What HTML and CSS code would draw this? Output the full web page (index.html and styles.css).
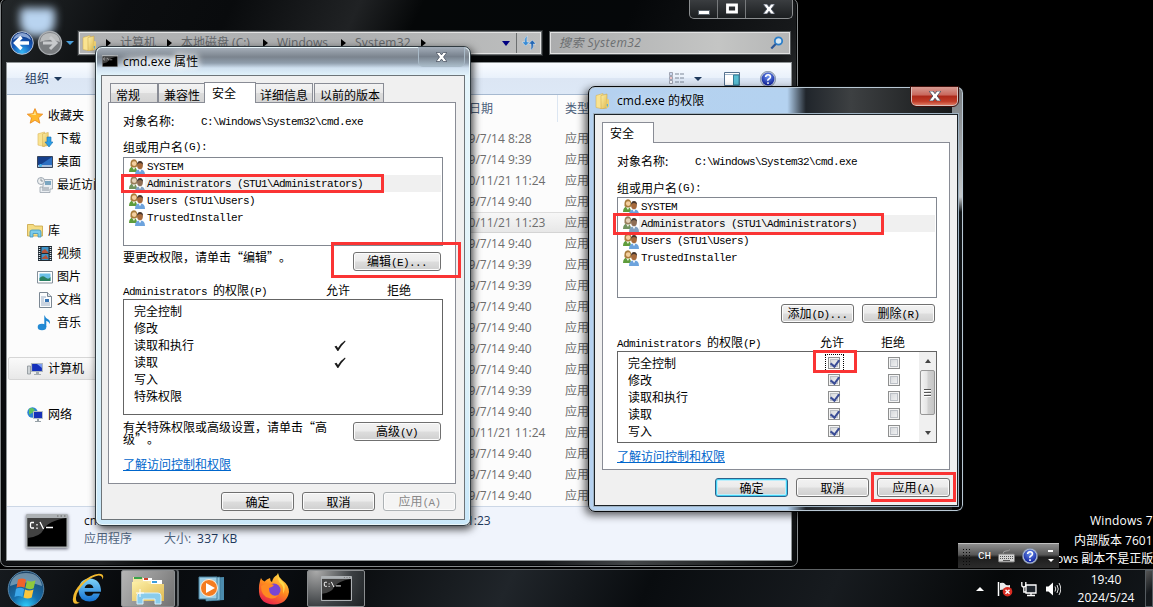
FILE: index.html
```html
<!DOCTYPE html>
<html lang="zh-CN">
<head>
<meta charset="utf-8">
<title>cmd.exe 权限</title>
<link rel="stylesheet" href="styles.css">
</head>
<body>
<svg class="defs" aria-hidden="true">
  <defs>
    <linearGradient id="gFolder" x1="0" y1="0" x2="1" y2="1"><stop offset="0" stop-color="#fdf0a8"/><stop offset="1" stop-color="#dfb84e"/></linearGradient>
    <radialGradient id="gBlue" cx=".5" cy=".9" r=".9"><stop offset="0" stop-color="#35b6f4"/><stop offset=".5" stop-color="#1558b8"/><stop offset="1" stop-color="#0c2a6c"/></radialGradient>
    <radialGradient id="gOrb" cx=".5" cy="1" r=".95"><stop offset="0" stop-color="#2fd2ff"/><stop offset=".4" stop-color="#1670ae"/><stop offset="1" stop-color="#1d4468"/></radialGradient>
    <radialGradient id="gHelp" cx=".5" cy=".3" r=".7"><stop offset="0" stop-color="#6d93ee"/><stop offset="1" stop-color="#0d1f9c"/></radialGradient>
    <linearGradient id="gFox" x1=".8" y1="0" x2=".3" y2="1"><stop offset="0" stop-color="#ffe24a"/><stop offset=".5" stop-color="#ff8a1e"/><stop offset="1" stop-color="#e8204c"/></linearGradient>
    <linearGradient id="gIe" x1="0" y1="0" x2="0" y2="1"><stop offset="0" stop-color="#7fd4fa"/><stop offset="1" stop-color="#1370d0"/></linearGradient>
    <symbol id="users" viewBox="0 0 16 16">
      <path d="M0 13q0-5 4-5.500q4 .5 4 5.500z" fill="#5e9c3c"/><path d="M3 8l2 3l1.500-3z" fill="#eef5e4"/>
      <path d="M1.500 7Q.8.500 5 .3q4 .4 3.200 7Q7.500 8.500 5 8.500T1.500 7z" fill="#a97c3b"/><circle cx="5.200" cy="4.600" r="2.300" fill="#f4cf9f"/>
      <path d="M6 16q0-5.500 5-5.700q5 .2 5 5.700z" fill="#6da3dd"/><path d="M9.500 10.200l1.500 3l1.500-3z" fill="#fff"/>
      <ellipse cx="11" cy="6.600" rx="2.900" ry="3.600" fill="#a66a3c"/><path d="M8 6q0-4 3-4t3 4q-1-2-3-2T8 6z" fill="#46352b"/>
    </symbol>
    <symbol id="folder" viewBox="0 0 16 16">
      <path d="M1 2.500L8 .5V16L1 14.500z" fill="#f9e391" stroke="#d1aa48" stroke-width=".5"/>
      <path d="M6 2.500l6-1.500v14L6 16z" fill="url(#gFolder)" stroke="#c79f40" stroke-width=".5"/>
      <path d="M12 6l2 .5V14l-3 1z" fill="#edcf72"/><path d="M12.300 11v2.500" stroke="#3fa8e0"/>
    </symbol>
    <symbol id="term" viewBox="0 0 42 34">
      <rect width="42" height="34" rx="1" fill="#aeb2b5"/><rect x="1.500" y="4" width="39" height="28.500" fill="#000"/>
      <path d="M1.500 4h39Q22 7 18 15T1.500 24z" fill="#666" opacity=".65"/><path d="M31 2h1.500m2 0H36m2 0h1.500" stroke="#666"/>
      <path d="M8 8.500H5.500q-1 0-1 1.500v2.500q0 1.500 1 1.500H8M11 10v1.500m0 2V15M14 8l3.500 7M20 13.500h7" fill="none" stroke="#fff" stroke-width="1.300"/>
    </symbol>
    <symbol id="help" viewBox="0 0 16 16">
      <circle cx="8" cy="8" r="7.700" fill="#b8c4d8" stroke="#65738c" stroke-width=".6"/><circle cx="8" cy="8" r="6.400" fill="url(#gHelp)"/>
      <path d="M5.600 6q.2-2.300 2.500-2.300T10.500 6Q10.300 7.300 8.900 8T8 9.800M8 11.200v1.700" stroke="#fff" stroke-width="1.600" fill="none"/>
    </symbol>
    <symbol id="cross" viewBox="0 0 12 10">
      <path d="M0 0h4l2 2.700L8 0h4L8.200 5L12 10H8L6 7.300L4 10H0l3.800-5z" fill="#fff" stroke="#4b5462" stroke-width=".9"/>
    </symbol>
    <symbol id="tick" viewBox="0 0 12 12"><path d="M.5 6.500L2.500 5.800L4 8Q7 3 11 .5L11.500 1.500Q7 6 4.300 11H3.500z" fill="#1b1b1b"/></symbol>
  </defs>
</svg>

<div class="desktop">
  <section class="window explorer">
    <div class="glow"></div>
    <div class="chrome">
      <div class="caption-buttons">
        <span><svg width="12" height="12" viewBox="0 0 12 12"><rect x=".5" y="7.500" width="11" height="4" fill="#fff" stroke="#59636c"/></svg></span>
        <span><svg width="12" height="12" viewBox="0 0 12 12"><path d="M1.500 2h9v7h-9z" fill="none" stroke="#fff" stroke-width="2.800"/></svg></span>
        <span class="wide"><svg width="12" height="10"><use href="#cross"/></svg></span>
      </div>
      <div class="navbar">
        <svg class="back" width="24" height="24" viewBox="0 0 24 24"><circle cx="12" cy="12" r="11.300" fill="url(#gBlue)" stroke="#b6c2d6"/><path d="M3 9q9-7 18 0q-2-7-9-7T3 9z" fill="#bcd2f4" opacity=".7"/><path d="M11.500 6L5.500 12l6 6M6 12h13" stroke="#fff" stroke-width="3.400" fill="none"/></svg>
        <svg class="fwd" width="26" height="26" viewBox="0 0 26 26"><circle cx="13" cy="13" r="11.500" fill="#7a7d80" stroke="#aaaeb2" stroke-width="1.300"/><path d="M3 12q1-9 10-9t10 9q-10-4-20 0z" fill="#b9bbbc"/><path d="M13 7l6 6l-6 6M18 13H6" stroke="#c8cacc" stroke-width="3" fill="none"/></svg>
        <i class="drop blue"></i>
        <div class="address">
          <svg width="16" height="16"><use href="#folder"/></svg>
          <i class="right c1"></i><span class="a1">计算机</span><i class="right"></i><span class="a2">本地磁盘 (C:)</span><i class="right"></i><span class="a3">Windows</span><i class="right"></i><span class="a4">System32</span><i class="right"></i>
          <i class="drop navy"></i>
          <b class="refresh"><svg width="16" height="16" viewBox="0 0 16 16"><path d="M6.500 1Q3 2 3.500 7H1l3.700 4L8.500 7H6Q5.500 3.500 6.500 1z" fill="#3a8cd4" stroke="#e4eef6" stroke-width=".5"/><path d="M9.500 15q3.500-1 3-6H15l-3.700-4L7.500 9H10q.5 3.500-.5 6z" fill="#2467b4" stroke="#e4eef6" stroke-width=".5"/></svg></b>
        </div>
        <div class="search"><em>搜索 System32</em><svg width="14" height="14" viewBox="0 0 14 14"><circle cx="8.500" cy="5" r="3.700" fill="#d7e8f4" stroke="#2b7ec9" stroke-width="1.800"/><path d="M5.700 8L1.300 12.500" stroke="#2c5797" stroke-width="2.200"/></svg></div>
      </div>
    </div>
    <div class="shell">
      <div class="toolbar">
        <span>组织</span><i class="drop dark"></i>
        <svg class="views" width="16" height="13" viewBox="0 0 16 13"><path d="M.5.500h3v3h-3zM.5 4.500h3v3h-3zM.5 8.500h3v3h-3z" fill="#f7f8fc" stroke="#8a8fa0" stroke-width=".8"/><path d="M1.500 2h1" stroke="#4478c8"/><path d="M1.500 6h1" stroke="#c22"/><path d="M6 2h4M11 2h4M6 6h4M11 6h4M6 10h4M11 10h4" stroke="#7d8796"/></svg>
        <i class="drop dark v"></i>
        <svg class="preview" width="16" height="14" viewBox="0 0 16 14"><path d="M.5.500h15v13H.5z" fill="#fff" stroke="#54718e"/><path d="M1 2.500h14" stroke="#9fb5cb"/><path d="M9.500 3H15v10H9.500z" fill="#58bdd2" stroke="#357e96"/></svg>
        <svg class="helpicon" width="16" height="16"><use href="#help"/></svg>
      </div>
      <div class="main">
        <nav class="tree">
          <div><svg width="16" height="16" viewBox="0 0 16 16"><path d="M8 .6l2.200 5.100l5.500.5l-4.200 3.600l1.300 5.400L8 12.300l-4.800 2.900l1.300-5.400L.3 6.200l5.500-.5z" fill="#ffb92e" stroke="#e98418" stroke-width=".8"/><path d="M8 3l1 4l-6 0l4-1z" fill="#ffe797"/></svg>收藏夹</div>
          <div class="sub"><svg width="16" height="16" viewBox="0 0 16 16"><use href="#folder" width="15" height="16"/><path d="M10 6h4v5h2l-4 5l-4-5h2z" fill="#2d9ee4" stroke="#1671b5" stroke-width=".6"/></svg>下载</div>
          <div class="sub"><svg width="16" height="16" viewBox="0 0 16 16"><path d="M.5 2.500h15v11H.5z" fill="#2c6fc2" stroke="#37455c"/><path d="M1 3h14L3 11H1z" fill="#153f8b"/><path d="M1 12h14" stroke="#a9bfdc" stroke-width="2"/><circle cx="3.500" cy="11.500" r="1.500" fill="#46b5eb"/></svg>桌面</div>
          <div class="sub"><svg width="16" height="16" viewBox="0 0 16 16"><path d="M6 2.500h9.500V12H13v3.500H3V10h3z" fill="#e9edf1" stroke="#98a2ac" stroke-width=".8"/><path d="M8 4h6v4H8z" fill="#7aa5c0"/><circle cx="4" cy="4" r="3.500" fill="#eef0f1" stroke="#8b98a4" stroke-width=".8"/><path d="M4 1.500V4h2M5 11h7M5 13h7" stroke="#74818e" stroke-width=".8" fill="none"/></svg>最近访问的位置</div>
          <div class="gap"></div>
          <div><svg width="16" height="15" viewBox="0 0 16 15"><path d="M.5 1.500h6l1 1.500h8v10H.5z" fill="#f4dc83" stroke="#c8a343" stroke-width=".8"/><path d="M3 14V9q0-2 2-2h7q2 0 2 2v5h-3v-3.500H6V14z" fill="#7bcbea" stroke="#3f94bf" stroke-width=".8"/></svg>库</div>
          <div class="sub"><svg width="16" height="16" viewBox="0 0 16 16"><path d="M1 0h14v15H1z" fill="#202a33"/><path d="M4.500 1h7v6h-7zM4.500 8h7v6h-7z" fill="#3f93c7"/><path d="M5 5l3-2l3 3v1H5zM5 12l4-3l2 3v1H5z" fill="#b4533a"/><path d="M2.500 1v14M13.500 1v14" stroke="#dce5eb" stroke-dasharray="1 1" stroke-width="1.500"/></svg>视频</div>
          <div class="sub"><svg width="16" height="14" viewBox="0 0 16 14"><path d="M.5 1.500h15v11.500H.5z" fill="#fff" stroke="#84909a"/><path d="M2.500 3.500h11v7.500h-11z" fill="#6cc0e8"/><path d="M2.500 8q3-3 6-.5t5-.5v4h-11z" fill="#298060"/></svg>图片</div>
          <div class="sub"><svg width="16" height="16" viewBox="0 0 16 16"><path d="M2.500.500h8l4 4v11h-12z" fill="#fbfcfd" stroke="#7b8793"/><path d="M10.500.500v4h4" fill="#dde4ea" stroke="#7b8793"/><path d="M4 5h5M4 7h3M4 9h3M4 11h9M4 13h9" stroke="#8ca3bc" stroke-width=".9"/><path d="M8 7h4v3H8z" fill="#3573b4"/></svg>文档</div>
          <div class="sub"><svg width="16" height="16" viewBox="0 0 16 16"><ellipse cx="5" cy="12" rx="4.300" ry="3.200" fill="#238ad4"/><path d="M7.300 12V0Q8.500 3 11 4.300T12.800 9Q12 6.500 9.300 5.800V12z" fill="#1d86d2"/></svg>音乐</div>
          <div class="gap"></div>
          <div class="hot"><svg width="16" height="16" viewBox="0 0 16 16"><path d="M.5 5h3v8h-3z" fill="#cfd4d7" stroke="#899095" stroke-width=".8"/><path d="M4.500 2.500h11v8h-11z" fill="#1430bb" stroke="#aeb7bf" stroke-width="1.200"/><path d="M10 3h5v4z" fill="#7a9bf0"/><path d="M9 11h3v2h2v1H7v-1h2z" fill="#a3acb1"/></svg>计算机</div>
          <div class="gap"></div>
          <div><svg width="16" height="16" viewBox="0 0 16 16"><circle cx="5.500" cy="5.500" r="5.200" fill="#2c82d5"/><path d="M2 2q3-2 5 0T5 6T2 8z" fill="#5fc35c"/><path d="M6.500 4.500h9v7h-9z" fill="#1732b8" stroke="#b6c0c7"/><path d="M10 12h2v2h2v1H8v-1h2z" fill="#98a2a8"/></svg>网络</div>
        </nav>
        <div class="files">
          <div class="cols"><span>修改日期</span><span>类型</span></div>
          <div class="cut"></div>
          <div class="row"><span>2009/7/14 8:28</span><span>应用程序</span></div>
          <div class="row"><span>2009/7/14 9:39</span><span>应用程序</span></div>
          <div class="row"><span>2010/11/21 11:24</span><span>应用程序</span></div>
          <div class="row"><span>2009/7/14 9:40</span><span>应用程序</span></div>
          <div class="row sel"><span>2010/11/21 11:23</span><span>应用程序</span></div>
          <div class="row"><span>2009/7/14 9:40</span><span>应用程序</span></div>
          <div class="row"><span>2009/7/14 9:39</span><span>应用程序</span></div>
          <div class="row"><span>2009/7/14 9:39</span><span>应用程序</span></div>
          <div class="row"><span>2009/7/14 9:40</span><span>应用程序</span></div>
          <div class="row"><span>2009/7/14 9:40</span><span>应用程序</span></div>
          <div class="row"><span>2009/7/14 9:40</span><span>应用程序</span></div>
          <div class="row"><span>2009/7/14 9:40</span><span>应用程序</span></div>
          <div class="row"><span>2009/7/14 9:39</span><span>应用程序</span></div>
          <div class="row"><span>2009/7/14 9:40</span><span>应用程序</span></div>
          <div class="row"><span>2010/11/21 11:24</span><span>应用程序</span></div>
          <div class="row"><span>2009/7/14 9:40</span><span>应用程序</span></div>
          <div class="row"><span>2009/7/14 9:40</span><span>应用程序</span></div>
          <div class="row"><span>2009/7/14 9:40</span><span>应用程序</span></div>
        </div>
      </div>
      <div class="details">
        <svg width="42" height="34"><use href="#term"/></svg>
        <div class="info">
          <div class="line"><span class="i1">cmd.exe</span><span class="i2">修改日期: 2010/11/21 11:23</span><span class="i3">创建日期: 2010/11/21 11:23</span></div>
          <div class="line"><span class="i4">应用程序</span><span class="i5">大小:</span><span class="i6">337 KB</span></div>
        </div>
      </div>
    </div>
  </section>

  <section class="window dialog props">
    <header><svg width="16" height="12" viewBox="0 0 42 34" preserveAspectRatio="none"><use href="#term"/></svg><h1>cmd.exe 属性</h1><span class="close glass"><svg width="11" height="10"><use href="#cross"/></svg></span></header>
    <div class="client">
      <div class="tabs"><span class="t1">常规</span><span class="t2">兼容性</span><span class="t3 on">安全</span><span class="t4">详细信息</span><span class="t5">以前的版本</span></div>
      <div class="panel">
        <div class="ln object"><span>对象名称:</span><code>C:\Windows\System32\cmd.exe</code></div>
        <div class="ln group">组或用户名<code>(G):</code></div>
        <ul class="users">
          <li><svg width="16" height="16"><use href="#users"/></svg><code>SYSTEM</code></li>
          <li class="sel"><svg width="16" height="16"><use href="#users"/></svg><code>Administrators (STU1\Administrators)</code></li>
          <li><svg width="16" height="16"><use href="#users"/></svg><code>Users (STU1\Users)</code></li>
          <li><svg width="16" height="16"><use href="#users"/></svg><code>TrustedInstaller</code></li>
        </ul>
        <div class="ask edit"><p>要更改权限，请单击<q class="l">“</q>编辑<q>”</q>。</p><button>编辑<code>(E)...</code></button></div>
        <div class="ln perm"><span><code>Administrators </code>的权限<code>(P)</code></span><span>允许</span><span>拒绝</span></div>
        <ul class="perms">
          <li><span>完全控制</span></li><li><span>修改</span></li>
          <li><span>读取和执行</span><svg width="12" height="12"><use href="#tick"/></svg></li>
          <li><span>读取</span><svg width="12" height="12"><use href="#tick"/></svg></li>
          <li><span>写入</span></li><li><span>特殊权限</span></li>
        </ul>
        <div class="ask adv"><p>有关特殊权限或高级设置，请单击<q class="l">“</q>高<br>级<q>”</q>。</p><button>高级<code>(V)</code></button></div>
        <a class="link">了解访问控制和权限</a>
      </div>
      <footer><button>确定</button><button>取消</button><button class="off">应用<code>(A)</code></button></footer>
    </div>
  </section>

  <section class="window dialog rights">
    <header><svg width="16" height="16"><use href="#folder"/></svg><h1>cmd.exe 的权限</h1><span class="close red"><svg width="12" height="10"><use href="#cross"/></svg></span></header>
    <div class="client">
      <div class="tabs"><span class="t3 on">安全</span></div>
      <div class="panel">
        <div class="ln object"><span>对象名称:</span><code>C:\Windows\System32\cmd.exe</code></div>
        <div class="ln group">组或用户名<code>(G):</code></div>
        <ul class="users">
          <li><svg width="16" height="16"><use href="#users"/></svg><code>SYSTEM</code></li>
          <li class="sel"><svg width="16" height="16"><use href="#users"/></svg><code>Administrators (STU1\Administrators)</code></li>
          <li><svg width="16" height="16"><use href="#users"/></svg><code>Users (STU1\Users)</code></li>
          <li><svg width="16" height="16"><use href="#users"/></svg><code>TrustedInstaller</code></li>
        </ul>
        <div class="pair"><button>添加<code>(D)...</code></button><button>删除<code>(R)</code></button></div>
        <div class="ln perm"><span><code>Administrators </code>的权限<code>(P)</code></span><span>允许</span><span>拒绝</span></div>
        <div class="permbox">
          <ul>
            <li><span>完全控制</span><i class="cb yes focus"></i><i class="cb"></i></li>
            <li><span>修改</span><i class="cb yes"></i><i class="cb"></i></li>
            <li><span>读取和执行</span><i class="cb yes"></i><i class="cb"></i></li>
            <li><span>读取</span><i class="cb yes"></i><i class="cb"></i></li>
            <li><span>写入</span><i class="cb yes"></i><i class="cb"></i></li>
          </ul>
          <div class="scroll"><i class="up"></i><div class="thumb"><b></b><b></b><b></b></div><i class="down"></i></div>
        </div>
        <a class="link">了解访问控制和权限</a>
      </div>
      <footer><button class="default">确定</button><button>取消</button><button>应用<code>(A)</code></button></footer>
    </div>
  </section>

  <div class="mark m1"></div><div class="mark m2"></div><div class="mark m3"></div><div class="mark m4"></div><div class="mark m5"></div>

  <div class="watermark"><div class="w1">Windows 7</div><div class="w2">内部版本 7601</div><div class="w3">ows 副本不是正版</div></div>

  <div class="langbar"><i class="grip"></i><code>CH</code>
    <svg width="17" height="14" viewBox="0 0 17 14"><path d="M5 5Q5 2 8 2t4-1.500" fill="none" stroke="#999"/><rect x=".5" y="5" width="16" height="8" rx="1" fill="#d4d4d4" stroke="#777"/><path d="M2 7.500h13M2 9.500h13" stroke="#555" stroke-dasharray="1 1"/><path d="M5 11.500h7" stroke="#555"/></svg>
    <svg width="16" height="16"><use href="#help"/></svg><span class="opts"><b></b><i></i></span></div>

  <div class="taskbar">
    <svg class="orb" width="38" height="38" viewBox="0 0 38 38"><circle cx="19" cy="19" r="17.800" fill="url(#gOrb)" stroke="#5683a5"/><path d="M3 16Q5 3 19 3t16 13q-16-7-32 0z" fill="#bdd5df" opacity=".5"/>
      <path d="M11 9.500q4-2 8 .2l-1.500 8q-4-2-8 0z" fill="#f0632b"/><path d="M20 10.500q4 2 8.500-.3l-1.800 8q-4 2-8.300-.2z" fill="#90c93d"/><path d="M9 18.700q4-2 8.200.2l-1.700 8q-4-2-8 0z" fill="#3ba6e8"/><path d="M18 19.500q4 2 8.500 0l-1.800 8q-4 2-8.200 0z" fill="#fbc63b"/></svg>
    <svg class="ie" width="32" height="32" viewBox="0 0 32 32"><path d="M28 20.500h-6.500q-1.500 2.500-4.500 2.500-4 0-4.500-4.300H29Q29 6 17.500 5.500 7 6 6.500 17.500 7 28 17.500 28.500q8 0 10.500-8zM12.600 15q.8-3.800 4.500-3.800t4.400 3.800z" fill="url(#gIe)"/><path d="M30.500 6.500Q33 1 27 .8 19 1 9.500 10 1 18 .8 26.500 1 33 8 29.500 3.500 30 4 24.500 5 17 13 9.500 21 3 26.500 2.500 30.500 2.500 30.500 6.500z" fill="#f2b92e"/></svg>
    <div class="task folderbtn"><svg width="34" height="32" viewBox="0 0 34 32"><path d="M2 4h9l2 3h18v5H2z" fill="#f7e7a4"/><path d="M3 4h8v2H3z" fill="#39a34b"/><path d="M12 5h9v3h-9z" fill="#fff"/><path d="M13 5h4v2h-4z" fill="#d0402c"/><path d="M20 7h11v4H20z" fill="#fff"/><path d="M21 8h5v2h-5z" fill="#3c9ddb"/><path d="M1 9h15l2 2h15v17H1z" fill="url(#gFolder)"/><path d="M6 31V23q0-3 3-3h18q3 0 3 3v8h-6v-5H12v5z" fill="#8accec" stroke="#d8f0fb"/><path d="M9 16v8M5 20h8" stroke="#fff"/></svg></div>
    <svg class="wmp" width="27" height="26" viewBox="0 0 27 26"><path d="M10 2l16-1v23l-14 1z" fill="#4b8bad"/><path d="M6 2l16-1v23L8 25z" fill="#8cc4dc" stroke="#39728f" stroke-width=".7"/><path d="M1 1h18v22H1z" fill="#9dcfe6" stroke="#49809d"/><circle cx="11" cy="12" r="8.500" fill="#f47c20" stroke="#fff0dc"/><path d="M8 7l9 5l-9 5z" fill="#fff"/></svg>
    <svg class="fox" width="32" height="32" viewBox="0 0 32 32"><path d="M3 5q1 3 3.500 3.500Q8.500 6 12 5q0 3 2 4 1-5 5-7l1-2q.5 4 4 7 7 5 7 12-2 12-15 12.500Q2 31 1 19 .500 11 3 5z" fill="url(#gFox)"/><circle cx="16" cy="17" r="6.500" fill="#7846d3"/><path d="M3 13q6-4 13-1-1 2-5 3 0 3 1 5 3 4 8 2-3 5-9 3-8-2-8-12z" fill="#ff8a22"/><path d="M20 3q0 6 3 8t2 10q4-8-1-13t-4-5z" fill="#ffd84a"/></svg>
    <div class="task cmdbtn"><svg width="31" height="25" viewBox="0 0 42 34" preserveAspectRatio="none"><use href="#term"/></svg></div>
    <div class="tray">
      <i class="up"></i>
      <svg width="16" height="16" viewBox="0 0 16 16"><path d="M1.500 1v14" stroke="#fff" stroke-width="1.500"/><path d="M3 2q4-1 5 1t5 1v6q-4 0-5-1T3 9z" fill="#ececec"/><circle cx="10.500" cy="10.700" r="4.800" fill="#d92c22"/><path d="M8.500 8.700l4 4m0-4l-4 4" stroke="#fff" stroke-width="1.500"/></svg>
      <svg width="16" height="16" viewBox="0 0 16 16"><path d="M5 4h10v8H5z" fill="#20262d" stroke="#fff" stroke-width="1.300"/><path d="M10 12v2M6 14.500h8M.8 1v3q0 2 2 2t2-2V1M2.800 6v5H5" stroke="#fff" stroke-width="1.300" fill="none"/></svg>
      <svg width="16" height="16" viewBox="0 0 16 16"><path d="M1 5.500h2.500L8 1.500v13l-4.500-4H1z" fill="#fff"/><path d="M10 5.500q1.500 2.500 0 5M12 4q2.500 4 0 8M14 2q3.500 6 0 12" stroke="#ddd" fill="none"/></svg>
      <div class="clock"><div>19:40</div><div>2024/5/24</div></div>
      <b class="peek"></b>
    </div>
  </div>
</div>
</body>
</html>
```
FILE: styles.css
```css
* { box-sizing: border-box; }
body { margin: 0; background: #000; }
.defs { position: absolute; width: 0; height: 0; }
.desktop { position: relative; width: 1153px; height: 607px; overflow: hidden; background: #000; font: 12px/16px "Open Sans", "Noto Sans CJK SC", sans-serif; white-space: nowrap; }
svg { display: block; flex: none; }
i { flex: none; }
.window { position: absolute; display: flex; flex-direction: column; }

/* triangles */
.drop { width: 0; height: 0; border: 4px solid transparent; border-top-color: #1e395b; border-bottom: 0; }
.drop.blue { border-top-color: #4b9ed8; margin-left: 3px; }
.drop.navy { border-top: 5px solid #000080; margin-left: auto; margin-right: 6px; }
.right { width: 0; height: 0; border: 4px solid transparent; border-left: 5px solid #000; border-right: 0; }

/* explorer */
.explorer { left: 0; top: -2px; width: 798px; height: 569px; border: 1px solid #85898b; border-radius: 7px; background: linear-gradient(115deg, #24282a 0, #0c0e10 12%, #090b0d 22%, #202224 34%, #050708 40%, #050709 60%, #17191b 76%, #434648 84%, #080a0b 100%); box-shadow: inset 0 0 0 1px #050607; padding: 0 5px 5px; }
.glow { position: absolute; left: 19px; top: 9px; width: 35px; height: 28px; background: #b9d4f0; border-radius: 4px 4px 14px 14px; filter: blur(4px); }
.chrome { height: 63px; flex: none; position: relative; }
.caption-buttons { display: flex; width: 104px; height: 20px; margin-left: 683px; border: 1px solid #8b8e90; border-top: 0; border-radius: 0 0 5px 5px; background: linear-gradient(#3c3f42, #1b1e20); }
.caption-buttons span { width: 28px; border-right: 1px solid #777a7c; display: grid; place-items: center; }
.caption-buttons .wide { width: 46px; border: 0; }
.navbar { display: flex; align-items: center; height: 26px; margin-top: 11px; padding-left: 4px; position: relative; }
.fwd { margin-left: 3px; }
.address { margin-left: 4px; width: 464px; height: 24px; display: flex; align-items: center; border: 1px solid #6b6f71; outline: 1px solid #25282a; box-shadow: inset 0 0 0 1px #e4e4e4; background: linear-gradient(90deg, #b2b3b4, #aeb0b1 60%, #bdbebe); padding-left: 3px; color: #636669; }
.address span { padding: 0 12px 0 9px; }
.c1 { margin-left: 8px; }
.address .a1 { width: 56px; } .address .a2 { width: 91px; } .address .a3 { width: 73px; } .address .a4 { width: 75px; letter-spacing: .2px; }
.refresh { width: 25px; height: 20px; border-left: 1px solid #6c6f70; display: grid; place-items: center; }
.search { margin-left: 7px; width: 242px; height: 24px; display: flex; justify-content: space-between; align-items: center; padding: 0 6px 0 9px; border: 1px solid #54585a; box-shadow: inset 0 0 0 1px #e2e2e2; background: linear-gradient(90deg, #abacad, #c4c5c4 70%, #b5b6b6); color: #6b6e70; letter-spacing: .45px; }
.shell { flex: 1; min-height: 0; width: 786px; border: 1px solid #8f9496; background: #fcfcfc; display: flex; flex-direction: column; overflow: hidden; }
.toolbar { height: 32px; flex: none; display: flex; align-items: center; padding-left: 18px; color: #1e395b; background: linear-gradient(#fafcff, #e9f1fb 48%, #dce6f4 50%, #dde8f6); border-bottom: 1px solid #a6b9d0; }
.toolbar .drop { margin-left: 5px; }
.views { margin-left: 607px; }
.toolbar .v { margin-left: 9px; }
.preview { margin-left: 22px; }
.helpicon { margin-left: 20px; }
.main { flex: 1; min-height: 0; display: flex; overflow: hidden; }
.tree { width: 190px; flex: none; padding-top: 9px; color: #000; }
.tree div { height: 23px; display: flex; align-items: center; gap: 5px; padding-left: 20px; }
.tree .sub { padding-left: 30px; gap: 4px; }
.tree .hot { margin: 0 1px; padding-left: 18px; border: 1px solid #d6d6d6; border-radius: 2px; background: linear-gradient(#fafafa, #e8e8e8); }
.files { flex: 1; padding-left: 251px; color: #6d6d6d; }
.cols { display: flex; height: 27px; align-items: center; color: #4c607a; background: linear-gradient(90deg, transparent 109px, #dce6f2 109px, #dce6f2 110px, transparent 110px); }
.cols span:first-child, .row span:first-child { width: 117px; flex: none; }
.cols span:first-child { margin-left: -3px; width: 120px; }
.cut { height: 6px; }
.row { height: 21px; display: flex; align-items: center; }
.row.sel { background: linear-gradient(#f7f7f7, #e7e7e7); border-top: 1px solid #ddd; border-bottom: 1px solid #d4d4d4; }
.details { height: 54px; flex: none; border-top: 1px solid #ccd7e6; background: #f0f4fc; display: flex; padding: 7px 0 0 19px; color: #1e395b; }
.details > svg { box-shadow: 0 1px 3px #667; }
.info { padding-left: 16px; }
.line { display: flex; height: 18px; line-height: 14px; }
.i1 { width: 58px; color: #111; } .i2 { width: 197px; }
.i4 { width: 80px; color: #51657f; } .i5 { width: 33px; color: #51657f; } .i6 { letter-spacing: .3px; }

/* dialogs */
.dialog { padding: 0 5px 5px; border-radius: 7px; font: 12px/12px "Noto Sans CJK SC", sans-serif; color: #000; }
.dialog code { font: 11px/12px "Liberation Mono", monospace; letter-spacing: -.6px; white-space: pre; }
.dialog .users code, .dialog .object code { line-height: 14px; }
.dialog .users code { margin-top: 1px; }
.dialog header { display: flex; flex: none; }
.dialog h1 { margin: 0; font: 12px/16px "Open Sans", "Noto Sans CJK SC", sans-serif; letter-spacing: .1px; }
.props { left: 95px; top: 46px; width: 376px; height: 480px; border: 1px solid #303a40; background: linear-gradient(#a8b1bc 0, #7b848e 10px, #8f9dac 16px, #cfe0f0 21px, #e4f5fc 29px, #e3f3f8 60%, #c9e8fa); box-shadow: inset 0 0 0 1px #eaf7fb, 2px 3px 8px rgba(0,0,0,.75); }
.props header { height: 28px; padding: 8px 0 0 1px; }
.props h1 { padding: 0 6px 0 5px; margin-top: -1px; background: radial-gradient(closest-side, rgba(226,236,245,.75) 40%, transparent); text-shadow: 0 0 6px #fff, 0 0 8px #fff, 0 0 10px #fff; }
.close { display: grid; place-items: center; margin-left: auto; }
.close.glass { width: 47px; height: 20px; margin-top: -8px; border: 1px solid #a9bac8; border-top: 0; border-radius: 0 0 5px 5px; background: linear-gradient(#a4aeba, #77818d 50%, #a9bbc8); }
.client { border: 1px solid #6d7478; background: #f0f0f0; flex: 1; }
.tabs { display: flex; align-items: flex-end; height: 26px; padding-left: 8px; }
.tabs span { height: 19px; padding: 5px 0 0 5px; border: 1px solid #898c95; border-bottom: 0; background: linear-gradient(#f3f3f3, #ebebeb 50%, #dcdcdc 52%, #d4d4d4); position: relative; }
.tabs .t1 { width: 48px; } .tabs .t2 { width: 47px; margin-right: -1px; } .tabs .t4 { width: 58px; margin-left: -1px; padding-left: 4px; } .tabs .t5 { width: 70px; margin-left: 1px; }
.tabs .on { width: 52px; height: 21px; background: #fff; margin-bottom: -1px; padding: 4px 0 0 7px; z-index: 1; }
.panel { margin-left: 6px; width: 348px; height: 382px; border: 1px solid #898c95; background: #fff; padding: 12px 0 0 14px; }
.ln { height: 12px; display: flex; }
.object span { width: 78px; }
.group { margin-top: 14px; }
ul { list-style: none; margin: 0; padding: 0; }
.users { width: 320px; height: 89px; border: 1px solid #828790; margin-top: 4px; padding: 0 1px 0 5px; }
.users li { height: 17px; display: flex; align-items: center; gap: 2px; }
.users .sel { background: linear-gradient(90deg, transparent 16px, #f0f0f0 16px); }
.users .sel svg { filter: saturate(.55); }
.ask { display: flex; justify-content: space-between; width: 318px; }
.ask p { margin: 0; }
.ask q { quotes: none; display: inline-block; width: 12px; } .ask q::before, .ask q::after { content: none; } .ask q.l { text-align: right; }
.edit { margin-top: 5px; height: 20px; } .adv { margin-top: 6px; height: 24px; }
button { margin: 0; padding: 0; width: 73px; height: 19px; border: 1px solid #707070; border-radius: 3px; box-shadow: inset 0 0 0 1px #fcfcfc; background: linear-gradient(#f2f2f2, #ebebeb 48%, #dddddd 52%, #cfcfcf); font: 12px/12px "Noto Sans CJK SC", sans-serif; color: #000; }
.ask button { width: 88px; margin-top: 1px; }
button.off { color: #888; border-color: #adb2b5; background: #f4f4f4; }
button.default { border-color: #2c628b; box-shadow: inset 0 0 0 1px #43d3f6, inset 0 0 0 2px #bdeefb; }
.perm { margin-top: 13px; }
.perm span:first-child { width: 203px; } .perm span:nth-child(2) { width: 61px; }
.perms { width: 320px; height: 116px; border: 1px solid #646464; margin-top: 3px; padding: 2px 0 0 10px; }
.perms li, .permbox li { height: 17px; display: flex; align-items: center; }
.perms span { width: 200px; }
.perms svg { margin-top: 2px; }
.link { display: block; width: max-content; color: #0066cc; text-decoration: underline; }
.props .link { margin-top: 13px; }
footer { display: flex; justify-content: flex-end; gap: 8px; padding: 8px 7px 0 0; }
.props footer { padding-right: 8px; }

.rights { left: 588px; top: 86px; width: 376px; height: 426px; border: 1px solid #07090a; background: linear-gradient(90deg, #b5d1ef 0, #b4d2f0 53%, #20252b 58%, #3d4042 70%, #161819 97%, transparent 97%), linear-gradient(#777c80 0, #c4c8ca 110px, #111517 125px, #050607); box-shadow: inset 0 0 0 1px #b9c8d4, -3px 3px 9px rgba(0,0,0,.65); }
.rights header { height: 27px; padding: 6px 0 0 1px; }
.rights h1 { padding-left: 6px; text-shadow: 0 0 6px #dcecff; }
.close.red { width: 47px; height: 19px; margin-top: -6px; border: 1px solid #d8c1bd; border-top: 0; border-radius: 0 0 5px 5px; outline: 1px solid #40100c; background: linear-gradient(#d69b93, #c9675b 45%, #ac2819 50%, #c03c28 80%, #dd7861); }
.rights .client { border-color: #1c2226; box-shadow: 0 0 0 1px #9fb2c2; }
.rights .tabs { height: 27px; padding-left: 7px; }
.rights .panel { height: 328px; margin-left: 7px; }
.rights .group { margin-top: 15px; }
.rights .users { height: 101px; margin-top: 3px; }
.pair { display: flex; justify-content: flex-end; gap: 8px; width: 318px; margin-top: 6px; }
.permbox { display: flex; width: 320px; height: 92px; border: 1px solid #646464; margin-top: 3px; }
.permbox ul { flex: 1; padding: 2px 0 0 10px; }
.permbox span { width: 200px; }
.cb { position: relative; width: 12px; height: 12px; border: 1px solid #8e8f8f; margin-right: 48px; background: linear-gradient(135deg, #cfd2d6, #f8f8f8); box-shadow: inset 0 0 0 1px #f4f4f4, inset 0 0 0 2px #bcc0c6; }
.cb + .cb { margin-right: 0; }
.cb.yes::after { content: ""; position: absolute; left: 3px; top: 0; width: 4px; height: 7px; border: solid #3b4d96; border-width: 0 2px 2px 0; transform: rotate(38deg); }
.focus::before { content: ""; position: absolute; inset: -4px -5px -4px -4px; border: 1px dotted #000; border-bottom: 0; }
.scroll { width: 17px; padding: 0 1px; background: #f0f0f0; display: flex; flex-direction: column; align-items: center; }
.up, .down { width: 0; height: 0; border: 3.500px solid transparent; }
.up { border-bottom: 4px solid #444; border-top: 0; margin-top: 7px; }
.down { border-top: 4px solid #444; border-bottom: 0; margin-top: auto; margin-bottom: 7px; }
.thumb { width: 15px; height: 45px; margin-top: 7px; border: 1px solid #979797; border-radius: 2px; background: linear-gradient(90deg, #f4f4f4, #e4e4e4 48%, #d2d2d2 52%, #c6c6c6); display: flex; flex-direction: column; gap: 2px; align-items: center; justify-content: center; }
.thumb b { width: 7px; height: 1px; background: #555; box-shadow: 0 1px #fff; }
.rights .link { margin-top: 7px; }

/* highlight rectangles over the windows */
.mark { position: absolute; border: 3px solid #fa3434; }
.m1 { left: 121px; top: 174px; width: 263px; height: 19px; }
.m2 { left: 331px; top: 242px; width: 130px; height: 36px; }
.m3 { left: 613px; top: 213px; width: 271px; height: 22px; }
.m4 { left: 813px; top: 350px; width: 44px; height: 23px; }
.m5 { left: 871px; top: 472px; width: 85px; height: 30px; }

.watermark { position: absolute; left: 1056px; top: 513px; color: #fff; }
.w1 { margin-left: 34px; height: 20px; letter-spacing: .2px; } .w2 { margin-left: 18px; height: 18px; }
.langbar { position: absolute; left: 958px; top: 543px; width: 101px; height: 25px; border-top: 1px solid #c0c0c0; background: linear-gradient(#8e8e8e, #565656 45%, #1d1d1d 55%, #2c2c2c); display: flex; align-items: center; gap: 7px; padding-left: 4px; color: #fff; }
.langbar code { font: 11px/12px "Liberation Mono", monospace; }
.grip { width: 9px; height: 17px; background: radial-gradient(circle, #0a0a0a .8px, transparent 1px) 0 0 / 3px 3px; }
.opts b { display: block; width: 5px; height: 2px; background: #fff; margin-bottom: 7px; }
.opts { margin-left: 3px; }
.opts i { display: block; border: 3px solid transparent; border-top-color: #fff; border-bottom: 0; width: 0; }

/* taskbar */
.taskbar { position: absolute; left: 0; top: 569px; width: 1153px; height: 38px; border-top: 1px solid #5e6264; background: linear-gradient(115deg, #161a1e, #07090b 12%, #0b0f14 22%, #07090b 28%, #20252a 44%, #090c0f 56%, #171b1f 72%, #060809 86%, #12161a); display: flex; align-items: center; }
.orb { margin-left: 7px; }
.ie { margin-left: 27px; }
.task { height: 37px; display: grid; place-items: center; border: 1px solid #8b8e90; border-radius: 2px; background: radial-gradient(circle at 15% 0, #aaa, #3b3f42 60%, #1d2124); }
.folderbtn { width: 54px; margin-left: 17px; background: linear-gradient(120deg, #b5b5b5, #8e8e8e 60%, #707070); box-shadow: 2px 0 #15181b, 4px 0 #656a6d; }
.wmp { margin-left: 23px; }
.fox { margin-left: 33px; }
.cmdbtn { width: 58px; margin-left: 17px; }
.tray { margin-left: auto; height: 37px; display: flex; align-items: center; gap: 8px; color: #fff; }
.tray .up { border-width: 0 4px 4px; border-style: solid; border-color: transparent transparent #fff; margin: 0 5px 0 0; }
.clock { width: 60px; margin-left: 7px; text-align: center; line-height: 18px; }
.peek { width: 8px; height: 37px; margin-left: 1px; border: 1px solid #555b60; background: linear-gradient(135deg, #555, #15191d 60%); }
```
